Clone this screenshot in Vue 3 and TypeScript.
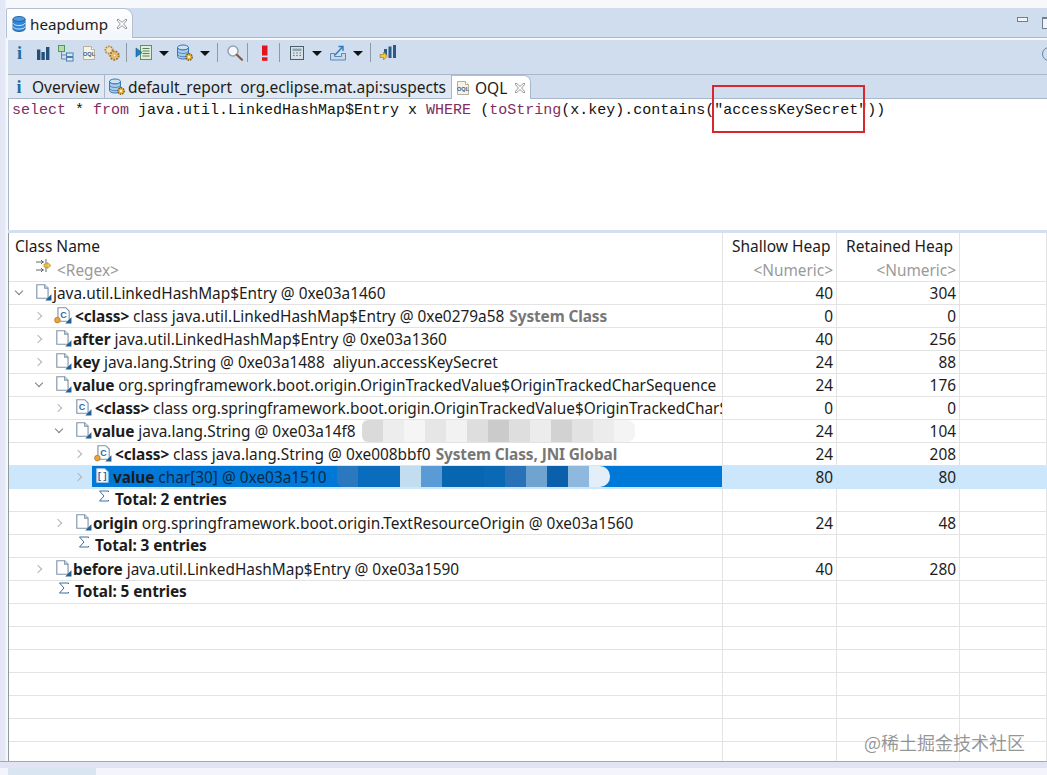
<script setup lang="ts">
interface Row {
  level: number
  chevron?: 'open' | 'closed'
  icon?: string
  label?: string
  text?: string
  tag?: string
  shallow?: string
  retained?: string
  selected?: boolean
  smudge?: 'grey' | 'blue'
  total?: boolean
}

const rows: Row[] = [
  { level: 0, chevron: 'open', icon: 'i-obj', text: 'java.util.LinkedHashMap$Entry @ 0xe03a1460', shallow: '40', retained: '304' },
  { level: 1, chevron: 'closed', icon: 'i-cls-dot', label: '<class>', text: 'class java.util.LinkedHashMap$Entry @ 0xe0279a58', tag: 'System Class', shallow: '0', retained: '0' },
  { level: 1, chevron: 'closed', icon: 'i-obj', label: 'after', text: 'java.util.LinkedHashMap$Entry @ 0xe03a1360', shallow: '40', retained: '256' },
  { level: 1, chevron: 'closed', icon: 'i-obj', label: 'key', text: 'java.lang.String @ 0xe03a1488  aliyun.accessKeySecret', shallow: '24', retained: '88' },
  { level: 1, chevron: 'open', icon: 'i-obj', label: 'value', text: 'org.springframework.boot.origin.OriginTrackedValue$OriginTrackedCharSequence', shallow: '24', retained: '176' },
  { level: 2, chevron: 'closed', icon: 'i-cls', label: '<class>', text: 'class org.springframework.boot.origin.OriginTrackedValue$OriginTrackedCharSequence', shallow: '0', retained: '0' },
  { level: 2, chevron: 'open', icon: 'i-obj', label: 'value', text: 'java.lang.String @ 0xe03a14f8', smudge: 'grey', shallow: '24', retained: '104' },
  { level: 3, chevron: 'closed', icon: 'i-cls-dot', label: '<class>', text: 'class java.lang.String @ 0xe008bbf0', tag: 'System Class, JNI Global', shallow: '24', retained: '208' },
  { level: 3, chevron: 'closed', icon: 'i-arr', label: 'value', text: 'char[30] @ 0xe03a1510', smudge: 'blue', selected: true, shallow: '80', retained: '80' },
  { level: 3, icon: 'i-sum', label: 'Total: 2 entries', total: true },
  { level: 2, chevron: 'closed', icon: 'i-obj', label: 'origin', text: 'org.springframework.boot.origin.TextResourceOrigin @ 0xe03a1560', shallow: '24', retained: '48' },
  { level: 2, icon: 'i-sum', label: 'Total: 3 entries', total: true },
  { level: 1, chevron: 'closed', icon: 'i-obj', label: 'before', text: 'java.util.LinkedHashMap$Entry @ 0xe03a1590', shallow: '40', retained: '280' },
  { level: 1, icon: 'i-sum', label: 'Total: 5 entries', total: true },
  { level: 0 }, { level: 0 }, { level: 0 }, { level: 0 }, { level: 0 }, { level: 0 }, { level: 0 },
]

const smudges: Record<string, string[]> = {
  grey: ['#dadada', '#ededed', '#f5f5f5', '#e6e6e6', '#f2f2f2', '#dedede', '#cbcbcb', '#dedede', '#ececec', '#d2d2d2', '#e2e2e2', '#ececec', '#f4f4f4'],
  blue: ['#2a78bd', '#0a6cbc', '#0a6cbc', '#c2dcf0', '#5b9bd5', '#0865b0', '#0865b0', '#0a68b5', '#2a72b8', '#6fa3d0', '#0a60aa', '#8fb8de', '#e4eef8'],
}
</script>

<template>
  <div class="window">
    <svg class="defs" width="0" height="0" aria-hidden="true">
      <symbol id="i-db" viewBox="0 0 16 16">
        <ellipse cx="8" cy="3" rx="6" ry="2.500" fill="#4d9ae0" stroke="#2a6aa8" />
        <path d="M2 3v10c0 1.400 2.700 2.500 6 2.500s6-1.100 6-2.500V3c0 1.400-2.700 2.500-6 2.500S2 4.400 2 3z" fill="#2f86d8" stroke="#2a6aa8" />
        <path d="M2 7c0 1.400 2.700 2.500 6 2.500S14 8.400 14 7M2 10.500c0 1.400 2.700 2.500 6 2.500s6-1.100 6-2.500" fill="none" stroke="#d6e8f8" />
      </symbol>
      <symbol id="i-dbgear" viewBox="0 0 18 18">
        <ellipse cx="7" cy="3.500" rx="5.500" ry="2.500" fill="#cfe2f4" stroke="#3a78b4" />
        <path d="M1.500 3.500v9c0 1.400 2.500 2.500 5.500 2.500s5.500-1.100 5.500-2.500v-9c0 1.400-2.500 2.500-5.500 2.500S1.500 4.900 1.500 3.500z" fill="#a8cdee" stroke="#3a78b4" />
        <path d="M1.500 7c0 1.400 2.500 2.500 5.500 2.500s5.500-1.100 5.500-2.500M1.500 10.200c0 1.400 2.500 2.500 5.500 2.500s5.500-1.100 5.500-2.500" fill="none" stroke="#3a78b4" stroke-width=".8" />
        <circle cx="13" cy="13" r="3.200" fill="#e8b23c" stroke="#7a5a1c" stroke-width="1.400" stroke-dasharray="1.500 .9" />
        <circle cx="13" cy="13" r="1.200" fill="#fff4cc" />
      </symbol>
      <symbol id="i-bars" viewBox="0 0 16 16">
        <path d="M2 4.500h3.400V15H2zM6.400 7h3.400v8H6.400zM11 2h3.400v13H11z" fill="#234f78" />
      </symbol>
      <symbol id="i-tree" viewBox="0 0 18 18">
        <rect x="1.500" y="1.500" width="6" height="6" fill="#b6dcae" stroke="#4f9a58" />
        <path d="M4.500 7.500V15h5M4.500 11h5" fill="none" stroke="#6d8aa8" />
        <rect x="9.500" y="9" width="6.500" height="3.500" fill="#dbe9f6" stroke="#4b7eae" />
        <rect x="9.500" y="13.500" width="6.500" height="3.500" fill="#dbe9f6" stroke="#4b7eae" />
      </symbol>
      <symbol id="i-page" viewBox="0 0 16 16">
        <path d="M2.500 1.500h8l3 3v10h-11z" fill="#f5f2e6" stroke="#b4b09c" />
        <path d="M10.500 1.500v3h3" fill="#fff" stroke="#b4b09c" />
      </symbol>
      <symbol id="i-gears" viewBox="0 0 18 18">
        <circle cx="6" cy="6" r="3.600" fill="#efe0b8" stroke="#b0893e" stroke-width="1.800" stroke-dasharray="1.600 1" />
        <circle cx="11.500" cy="11.500" r="4.200" fill="#f0c877" stroke="#a87428" stroke-width="2" stroke-dasharray="1.800 1.100" />
        <circle cx="11.500" cy="11.500" r="1.500" fill="#fff8e4" stroke="#a87428" stroke-width=".6" />
      </symbol>
      <symbol id="i-list" viewBox="0 0 18 18">
        <rect x="5.500" y="1.500" width="11" height="14" fill="#e2efd8" stroke="#5f8f63" />
        <path d="M7.500 4.500h7M7.500 7h7M7.500 9.500h7M7.500 12h7" stroke="#5c7f60" />
        <path d="M1 4l6 4.500L1 13z" fill="#1e7fc4" stroke="#135a90" stroke-width=".6" />
      </symbol>
      <symbol id="i-search" viewBox="0 0 18 18">
        <circle cx="7" cy="7" r="5" fill="#f4f7fb" stroke="#9aa2ac" stroke-width="1.500" />
        <path d="M10.800 10.800l5.200 5" stroke="#8a5a3e" stroke-width="2.200" stroke-linecap="round" />
      </symbol>
      <symbol id="i-warn" viewBox="0 0 16 16">
        <path d="M5 0.500h5.500v10H5z" fill="#e3141c" />
        <path d="M5 12.300h5.500v3.500H5z" fill="#e3141c" />
      </symbol>
      <symbol id="i-calc" viewBox="0 0 16 16">
        <rect x="1.500" y="1.500" width="13" height="13" fill="#d8e2e6" stroke="#4b5d68" />
        <rect x="3.500" y="3.500" width="9" height="2.500" fill="#8ea4b0" />
        <path d="M4 8h1.500M7.200 8h1.500M10.500 8H12M4 10.500h1.500M7.200 10.500h1.500M10.500 10.500H12" stroke="#4f7f8e" stroke-width="1.200" />
      </symbol>
      <symbol id="i-export" viewBox="0 0 18 18">
        <path d="M1.500 9.500v6.500h15V9.500h-4v3h-7v-3z" fill="#c6d8ec" stroke="#5e88b4" />
        <path d="M6 11L13 3.500M9.500 2.500h4.500v4.500" fill="none" stroke="#2a7bbd" stroke-width="1.400" />
      </symbol>
      <symbol id="i-chart" viewBox="0 0 18 18">
        <path d="M5 5h3v7H5zM9.500 2.500h3V14h-3zM14 1h3v13h-3z" fill="#2b5a85" />
        <path d="M1 10.500h3.500V8l4 4-4 4v-2.500H1z" fill="#f2c644" stroke="#a8842a" stroke-width=".7" />
      </symbol>
      <symbol id="i-obj" viewBox="0 0 16 16">
        <path d="M2.500 1.500h7l3 3v9h-10z" fill="#fff" stroke="#7d93a8" />
        <path d="M9.500 1.500v3h3" fill="#e8eef4" stroke="#7d93a8" />
        <path d="M15.500 10v5.500H10z" fill="#1f5f96" />
      </symbol>
      <symbol id="i-cls" viewBox="0 0 16 16">
        <path d="M2.500 1.500h7l3 3v9h-10z" fill="#fff" stroke="#7d93a8" />
        <path d="M15.500 10v5.500H10z" fill="#1f5f96" />
      </symbol>
      <symbol id="i-cls-dot" viewBox="0 0 16 16">
        <path d="M3.500 1.500h7l3 3v9h-10z" fill="#fff" stroke="#7d93a8" />
        <path d="M15.500 10v5.500H10z" fill="#1f5f96" />
        <circle cx="3" cy="12.500" r="2.500" fill="#eda33c" stroke="#a86a1c" stroke-width=".6" />
      </symbol>
      <symbol id="i-arr" viewBox="0 0 16 16">
        <path d="M2.500 1.500h7l3 3v9h-10z" fill="#fff" stroke="#b9cbdc" />
      </symbol>
      <symbol id="i-sum" viewBox="0 0 12 12">
        <path d="M10.500 2V1h-9l4.500 5-4.500 5h9v-1" fill="none" stroke="#3e6a96" />
      </symbol>
      <symbol id="i-filter" viewBox="0 0 16 16">
        <path d="M1 4h8M1 12h8M11 1v5M11 9v5M6 2l2 2-2 2M6 10l2 2-2 2" fill="none" stroke="#555" stroke-width=".9" />
        <path d="M9 6h3.500V4.500L16 7.500l-3.500 3V9H9z" fill="#f2c644" stroke="#a8842a" stroke-width=".6" />
      </symbol>
      <symbol id="i-close" viewBox="0 0 12 12">
        <path d="M2 1l4 3.300L10 1l1 1-3.300 4L11 10l-1 1-4-3.300L2 11l-1-1 3.300-4L1 2z" fill="#fff" stroke="#8b8f92" stroke-width=".9" />
      </symbol>
    </svg>

    <header class="editor-tabs">
      <div class="main-tab">
        <svg class="ico16"><use href="#i-db" /></svg>
        <span>heapdump</span>
        <svg class="close"><use href="#i-close" /></svg>
      </div>
      <div class="win-buttons">
        <span class="min-btn"></span>
        <span class="max-btn"></span>
      </div>
    </header>

    <nav class="toolbar">
      <span class="slot"><span class="info-mark">i</span></span>
      <span class="slot"><svg class="ico16"><use href="#i-bars" /></svg></span>
      <span class="slot"><svg class="ico18"><use href="#i-tree" /></svg></span>
      <span class="slot">
        <svg class="ico16" viewBox="0 0 16 16"><use href="#i-page" /><text class="oql-mark" x="8" y="11">OQL</text></svg>
      </span>
      <span class="slot"><svg class="ico18"><use href="#i-gears" /></svg></span>
      <span class="sep"></span>
      <span class="slot"><svg class="ico18"><use href="#i-list" /></svg></span>
      <span class="arrow"></span>
      <span class="slot"><svg class="ico18"><use href="#i-dbgear" /></svg></span>
      <span class="arrow"></span>
      <span class="sep"></span>
      <span class="slot"><svg class="ico18"><use href="#i-search" /></svg></span>
      <span class="sep near"></span>
      <span class="slot"><svg class="ico16"><use href="#i-warn" /></svg></span>
      <span class="sep"></span>
      <span class="slot"><svg class="ico16"><use href="#i-calc" /></svg></span>
      <span class="arrow"></span>
      <span class="slot"><svg class="ico18"><use href="#i-export" /></svg></span>
      <span class="arrow"></span>
      <span class="sep"></span>
      <span class="slot"><svg class="ico18"><use href="#i-chart" /></svg></span>
      <span class="help-edge"></span>
    </nav>

    <div class="sub-tabs">
      <div class="sub-tab overview">
        <span class="info-mark small">i</span>
        <span>Overview</span>
      </div>
      <div class="sub-tab report">
        <svg class="ico18"><use href="#i-dbgear" /></svg>
        <span>default_report&nbsp; org.eclipse.mat.api:suspects</span>
      </div>
      <div class="sub-tab active">
        <svg class="ico16" viewBox="0 0 16 16"><use href="#i-page" /><text class="oql-mark" x="8" y="11">OQL</text></svg>
        <span>OQL</span>
        <svg class="close"><use href="#i-close" /></svg>
      </div>
    </div>

    <section class="editor">
      <code class="query"><span class="kw">select</span> * <span class="kw">from</span> java.util.LinkedHashMap$Entry x <span class="kw">WHERE</span> (<span class="kw">toString</span>(x.key).contains("accessKeySecret"))</code>
    </section>
    <div class="sash"></div>

    <section class="table">
      <div class="row head">
        <div class="cell name head-name">Class Name</div>
        <div class="cell col-head">Shallow Heap</div>
        <div class="cell col-head">Retained Heap</div>
        <div class="cell"></div>
      </div>
      <div class="row filter">
        <div class="cell name filter-name">
          <svg class="ico16"><use href="#i-filter" /></svg>
          <span>&lt;Regex&gt;</span>
        </div>
        <div class="cell num muted">&lt;Numeric&gt;</div>
        <div class="cell num muted">&lt;Numeric&gt;</div>
        <div class="cell"></div>
      </div>
      <div v-for="(row, i) in rows" :key="i" class="row" :class="{ selected: row.selected }">
        <div class="cell name" :style="{ paddingLeft: 4 + row.level * 20 + 'px' }">
          <span class="chevron" :class="row.chevron"></span>
          <div v-if="row.icon" class="content">
            <svg class="row-icon" :class="row.icon" viewBox="0 0 16 16">
              <use :href="'#' + row.icon" />
              <text v-if="row.icon === 'i-cls'" class="cls-mark" x="7" y="11">C</text>
              <text v-if="row.icon === 'i-cls-dot'" class="cls-mark" x="8.500" y="10.500">C</text>
              <text v-if="row.icon === 'i-arr'" class="arr-mark" x="7.300" y="10.500">[]</text>
            </svg>
            <b v-if="row.label" class="label" :class="{ total: row.total }">{{ row.label }}</b>
            <span v-if="row.text" class="text">{{ row.text }}</span>
            <b v-if="row.tag" class="tag">{{ row.tag }}</b>
            <span v-if="row.smudge" class="smudge" :class="row.smudge">
              <i v-for="(c, j) in smudges[row.smudge]" :key="j" :style="{ background: c }"></i>
            </span>
          </div>
        </div>
        <div class="cell num">{{ row.shallow }}</div>
        <div class="cell num">{{ row.retained }}</div>
        <div class="cell"></div>
      </div>
      <div class="watermark">@稀土掘金技术社区</div>
    </section>

    <footer class="status">
      <div class="status-tab"></div>
    </footer>

    <div class="callout"></div>
  </div>
</template>

<style scoped>
.window {
  position: relative;
  width: 1047px;
  height: 775px;
  overflow: hidden;
  display: flex;
  flex-direction: column;
  padding: 8px 0 0 6px;
  box-sizing: border-box;
  background: linear-gradient(90deg, #e4e7f5 0, #e4e7f5 5px, #f7f8fc 6px);
  font-family: "Noto Sans", "Open Sans", sans-serif;
  font-size: 15.400px;
  color: #1c1c1c;
}
.defs { position: absolute; }
.ico16 { width: 16px; height: 16px; flex: none; }
.ico18 { width: 18px; height: 18px; flex: none; }
.close { width: 12px; height: 12px; flex: none; }
.info-mark {
  font-family: "Liberation Serif", serif;
  font-weight: 700;
  font-size: 18px;
  line-height: 20px;
  color: #1d6ba6;
}
.info-mark.small {
  width: 16px;
  text-align: center;
  flex: none;
}
.oql-mark {
  font-family: "Liberation Sans", sans-serif;
  font-weight: 700;
  font-size: 5.600px;
  text-anchor: middle;
  fill: #3a5f86;
}
.cls-mark {
  font-family: "Liberation Sans", sans-serif;
  font-weight: 700;
  font-size: 8px;
  text-anchor: middle;
  fill: #2f6aa6;
}
.arr-mark {
  font-family: "Liberation Mono", monospace;
  font-weight: 700;
  font-size: 8px;
  text-anchor: middle;
  fill: #1f5f96;
}

.editor-tabs {
  height: 30px;
  flex: none;
  box-sizing: border-box;
  margin-left: 2px;
  display: flex;
  justify-content: space-between;
  background: #cfddee;
  border-bottom: 1px solid #a9b8c8;
}
.main-tab {
  margin-left: -2px;
  width: 127px;
  height: 30px;
  box-sizing: border-box;
  padding-left: 4px;
  display: flex;
  align-items: center;
  gap: 3px;
  font-size: 15.200px;
  background: linear-gradient(#fff, #f2f6fb);
  border: 1px solid #b3c0cf;
  border-bottom: none;
  border-radius: 2px 9px 0 0;
}
.main-tab .close { margin-left: 5px; }
.win-buttons {
  display: flex;
  gap: 14px;
  padding-top: 9px;
  margin-right: -9px;
}
.min-btn {
  width: 9px;
  height: 3px;
  border: 1px solid #6f7f90;
  background: #f0f4f8;
}
.max-btn {
  width: 12px;
  height: 9px;
  border: 1px solid #6f7f90;
  border-top-width: 2px;
  background: #f0f4f8;
}

.toolbar {
  position: relative;
  margin-top: 2px;
  height: 35px;
  flex: none;
  box-sizing: border-box;
  margin-left: 2px;
  display: flex;
  align-items: center;
  background: #cfddee;
  border-bottom: 1px solid #a9b8c8;
  padding-bottom: 9px;
}
.slot {
  width: 23px;
  height: 20px;
  flex: none;
  display: flex;
  align-items: center;
  justify-content: center;
}
.sep {
  width: 1px;
  height: 19px;
  flex: none;
  margin: 0 5px 0 3px;
  background: #8d9aa6;
}
.sep.near { margin-left: 1px; }
.arrow {
  width: 18px;
  height: 20px;
  flex: none;
  position: relative;
}
.arrow::after {
  content: "";
  position: absolute;
  left: 4px;
  top: 8px;
  border-style: solid;
  border-width: 5px 5px 0;
  border-color: #111 transparent transparent;
}
.help-edge {
  position: absolute;
  right: -9px;
  top: 7px;
  width: 12px;
  height: 12px;
  border: 1px solid #5f86aa;
  border-radius: 50%;
}

.sub-tabs {
  height: 24px;
  flex: none;
  margin-left: 2px;
  box-sizing: border-box;
  display: flex;
  background: #cfddee;
  border-bottom: 1px solid #a9b8c8;
}
.sub-tab {
  height: 23px;
  box-sizing: border-box;
  display: flex;
  align-items: center;
  background: #e0e9f3;
  border-right: 1px solid #a9b8c8;
  white-space: nowrap;
  font-size: 15.500px;
}
.overview { width: 97px; padding-left: 3px; gap: 5px; }
.report { width: 347px; padding-left: 3px; gap: 2px; }
.active {
  width: 79px;
  height: 24px;
  padding-left: 3px;
  gap: 4px;
  background: #fff;
  border-top: 1px solid #b3c0cf;
  border-radius: 0 7px 0 0;
  z-index: 1;
}
.active .close { margin-left: 3px; }

.editor {
  height: 131px;
  flex: none;
  margin-left: 2px;
  background: #fff;
  border-left: 1px solid #a9b8c8;
  box-sizing: border-box;
  padding: 0 3px;
}
.query {
  display: block;
  font-family: "Liberation Mono", "DejaVu Sans Mono", monospace;
  font-size: 15px;
  line-height: 24px;
  white-space: pre;
  color: #111;
}
.kw { color: #7f2d62; }
.sash {
  height: 3px;
  flex: none;
  margin-left: 2px;
  background: #d3e0f0;
}

.table {
  position: relative;
  flex: none;
  height: 528px;
  overflow: hidden;
  margin-left: 2px;
  background: #fff;
  border-left: 1px solid #8f9a9a;
}
.row {
  display: grid;
  grid-template-columns: 714px 114px 123px 1fr;
  height: 23px;
  box-sizing: border-box;
  border-bottom: 1px solid #e3e3e3;
  line-height: 24px;
}
.row.head {
  height: 25px;
  border-bottom: none;
  line-height: 26px;
  font-size: 15.500px;
}
.row.filter {
  height: 24px;
  line-height: 26px;
}
.cell {
  box-sizing: border-box;
  border-right: 1px solid #e3e3e3;
  white-space: nowrap;
  overflow: hidden;
  min-width: 0;
}
.cell.name {
  display: flex;
  align-items: stretch;
}
.head-name { padding-left: 6px; }
.col-head { padding-left: 9px; }
.filter-name {
  padding-left: 26px;
  align-items: center;
  gap: 6px;
  color: #9a9a9a;
}
.num {
  text-align: right;
  padding-right: 3px;
}
.muted { color: #9a9a9a; }
.chevron {
  position: relative;
  width: 14px;
  flex: none;
}
.chevron.open::after,
.chevron.closed::after {
  content: "";
  position: absolute;
  width: 5px;
  height: 5px;
  border-right: 1.500px solid #7c7c7c;
  border-bottom: 1.500px solid #7c7c7c;
}
.chevron.open::after {
  left: 3px;
  top: 6px;
  transform: rotate(45deg);
}
.chevron.closed::after {
  left: 2px;
  top: 8px;
  transform: rotate(-45deg);
  border-color: #b4b4b4;
}
.content {
  position: relative;
  flex: 1;
  min-width: 0;
  margin-left: 5px;
  padding-left: 4px;
  display: flex;
  align-items: baseline;
  overflow: hidden;
}
.row-icon {
  width: 18px;
  height: 18px;
  flex: none;
  align-self: flex-start;
  margin: 1px 1px 0 -2px;
}
.row-icon.i-cls,
.row-icon.i-cls-dot {
  margin-right: 3px;
}
.row-icon.i-sum {
  width: 12px;
  height: 12px;
  margin: 1px 5px 0 2px;
}
.label {
  font-weight: 700;
  letter-spacing: -0.100px;
  flex: none;
  margin-right: 4px;
}
.label.total { margin-top: -1px; }
.text { flex: none; white-space: pre; }
.tag {
  flex: none;
  margin-left: 5px;
  color: #777;
  letter-spacing: -0.100px;
  font-weight: 700;
}
.smudge {
  position: absolute;
  top: 0;
  display: flex;
  height: 22px;
}
.smudge i {
  display: block;
  width: 21px;
}
.smudge.grey { left: 290px; border-radius: 6px 8px 8px 6px; overflow: hidden; }
.smudge.blue { left: 245px; height: 21px; border-radius: 0 10px 10px 6px; overflow: hidden; }
.selected {
  background: #cce6fb;
  border-bottom-color: #cce6fb;
}
.selected .cell { border-right-color: transparent; }
.selected .content {
  background: #0078d7;
  height: 21px;
}
.selected .text { color: #0d2a44; }
.watermark {
  position: absolute;
  right: 22px;
  bottom: 8px;
  font-family: "Noto Sans CJK SC", sans-serif;
  font-size: 18px;
  line-height: 22px;
  color: rgba(110, 110, 110, 0.72);
  white-space: nowrap;
}

.status {
  flex: 1;
  margin-left: -6px;
  background: #e2e4f4;
  border-top: 1px solid #a2aaaa;
  position: relative;
}
.status::after {
  content: "";
  position: absolute;
  left: 0;
  right: 0;
  top: 6px;
  bottom: 0;
  background: #f3f4fc;
}
.status-tab {
  position: absolute;
  z-index: 1;
  left: 8px;
  top: 6px;
  width: 88px;
  bottom: 0;
  background: #d9e5f1;
}

.callout {
  position: absolute;
  left: 712px;
  top: 85px;
  width: 153px;
  height: 48px;
  box-sizing: border-box;
  border: 2px solid #d9272e;
}
</style>
